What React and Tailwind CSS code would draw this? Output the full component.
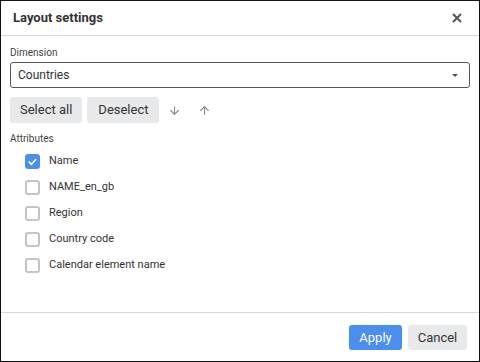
import { ArrowDown, ArrowUp } from 'lucide-react';

const attributes = [
    { name: 'Name', checked: true },
    { name: 'NAME_en_gb', checked: false },
    { name: 'Region', checked: false },
    { name: 'Country code', checked: false },
    { name: 'Calendar element name', checked: false },
];

const CheckRow = ({ name, checked }) => (
    <div className="h-[26px] flex items-center pl-[15px]">
        {checked ? (
            <span className="w-[15px] h-[15px] rounded-[3px] bg-[#4a8ff0] flex items-center justify-center">
                <svg width="11" height="11" viewBox="0 0 12 12">
                    <path d="M2 6.2 L4.8 9 L10 3.2" fill="none" stroke="white" strokeWidth="1.8" />
                </svg>
            </span>
        ) : (
            <span className="w-[15px] h-[15px] rounded-[3px] border-2 border-[#c4c4c6] bg-white" />
        )}
        <span className="ml-[9px] text-[11px] text-[#333]">{name}</span>
    </div>
);

export default function App() {
    return (
        <div
            className="w-[480px] h-[362px] border border-[#111] bg-white flex flex-col"
            style={{ fontFamily: 'Roboto, "Liberation Sans", sans-serif' }}
        >
            {/* header */}
            <div className="h-[35px] shrink-0 border-b border-[#d9d9d9] flex items-center justify-between pl-[12px] pr-[17px]">
                <h1 className="text-[13px] font-bold text-[#333]">Layout settings</h1>
                <svg width="10" height="10" viewBox="0 0 10 10">
                    <path d="M1 1 L9 9 M9 1 L1 9" stroke="#555" strokeWidth="2" />
                </svg>
            </div>

            {/* body */}
            <div className="flex-1 px-[9px] pt-[10px]">
                <p className="text-[10px] leading-[14px] text-[#444]">Dimension</p>
                <div className="mt-[2px] h-[26px] border border-[#555] rounded-[3px] flex items-center justify-between pl-[7px] pr-[11px]">
                    <span className="text-[12px] text-[#333]">Countries</span>
                    <svg width="6" height="3" viewBox="0 0 6 3">
                        <path d="M0 0 L6 0 L3 3 Z" fill="#555" />
                    </svg>
                </div>

                <div className="mt-[9px] flex items-center gap-[5px]">
                    <button className="h-[26px] px-[10px] rounded-[3px] bg-[#e8e9eb] text-[13px] text-[#333]">Select all</button>
                    <button className="h-[26px] px-[11px] rounded-[3px] bg-[#e8e9eb] text-[13px] text-[#333]">Deselect</button>
                    <div className="flex items-center gap-[17px] ml-[4px]">
                        <ArrowDown size={13} strokeWidth={2} className="text-[#888]" />
                        <ArrowUp size={13} strokeWidth={2} className="text-[#888]" />
                    </div>
                </div>

                <p className="mt-[9px] text-[10px] leading-[14px] text-[#444]">Attributes</p>
                <div className="mt-[2px]">
                    {attributes.map(a => (
                        <CheckRow key={a.name} name={a.name} checked={a.checked} />
                    ))}
                </div>
            </div>

            {/* footer */}
            <div className="h-[49px] shrink-0 border-t border-[#d9d9d9] flex items-center justify-end gap-[6px] pr-[12px] pt-[1px]">
                <button className="h-[25px] w-[53px] rounded-[3px] bg-[#4a8ff0] text-[13px] text-white">Apply</button>
                <button className="h-[25px] w-[59px] rounded-[3px] bg-[#e8e9eb] text-[13px] text-[#333]">Cancel</button>
            </div>
        </div>
    );
}
